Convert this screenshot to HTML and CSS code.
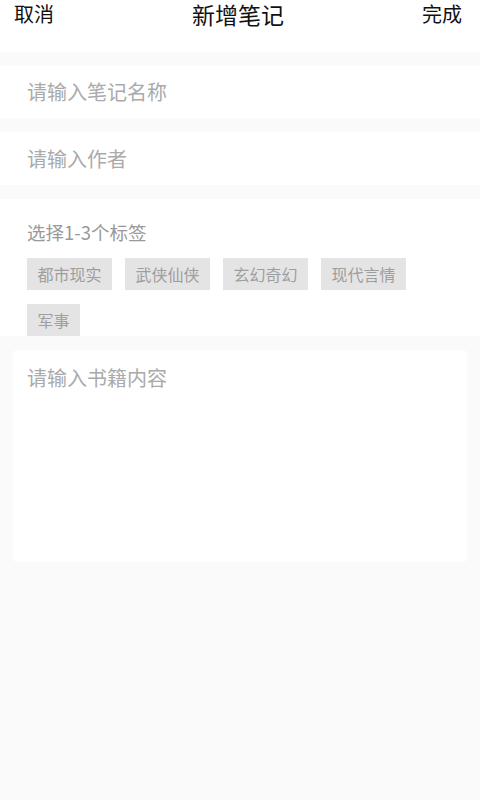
FILE: index.html
```html
<!DOCTYPE html>
<html lang="zh-CN">
<head>
<meta charset="utf-8">
<title>新增笔记</title>
<link rel="stylesheet" href="styles.css">
</head>
<body>
<div class="page">
  <header class="nav">
    <span class="nav-btn">取消</span>
    <span class="nav-title">新增笔记</span>
    <span class="nav-btn">完成</span>
  </header>
  <div class="field"><span class="placeholder">请输入笔记名称</span></div>
  <div class="field"><span class="placeholder">请输入作者</span></div>
  <section class="tags">
    <div class="tags-label">选择1-3个标签</div>
    <div class="tag-list">
      <span class="tag">都市现实</span>
      <span class="tag">武侠仙侠</span>
      <span class="tag">玄幻奇幻</span>
      <span class="tag">现代言情</span>
      <span class="tag">军事</span>
    </div>
  </section>
  <div class="content-box"><span class="placeholder">请输入书籍内容</span></div>
</div>
</body>
</html>
```
FILE: styles.css
```css
* { box-sizing: border-box; }
html, body {
  margin: 0;
  padding: 0;
  background: #fafafa;
  font-family: "Noto Sans CJK SC", "Noto Sans", sans-serif;
}
.page {
  width: 480px;
  min-height: 800px;
  background: #fafafa;
  display: flex;
  flex-direction: column;
}
.nav {
  height: 52px;
  background: #fff;
  display: flex;
  justify-content: space-between;
  align-items: flex-start;
  padding: 0 18px 0 14px;
  margin-bottom: 14px;
}
.nav-btn {
  font-size: 20px;
  line-height: 28px;
  color: #111;
}
.nav-title {
  font-size: 23px;
  line-height: 29px;
  color: #111;
}
.field {
  height: 52px;
  background: #fff;
  display: flex;
  align-items: center;
  padding: 0 27px;
  margin-bottom: 14px;
}
.field + .field { height: 53px; margin-bottom: 14px; }
.placeholder {
  font-size: 20px;
  color: #aaaaaa;
  line-height: 28px;
}
.tags {
  background: #fff;
  padding: 20px 27px 0;
  display: flex;
  flex-direction: column;
  margin-bottom: 14px;
}
.tags-label {
  font-size: 18.5px;
  line-height: 26px;
  color: #999;
  margin-bottom: 13px;
}
.tag-list {
  display: flex;
  flex-wrap: wrap;
  column-gap: 13px;
  row-gap: 14px;
}
.tag {
  height: 32px;
  display: flex;
  align-items: center;
  padding: 0 10.5px;
  font-size: 16px;
  color: #9e9e9e;
  background: #e4e4e4;
}
.content-box {
  margin: 0 13px;
  height: 212px;
  background: #fff;
  border-radius: 4px;
  padding: 14px 14px;
}
```
